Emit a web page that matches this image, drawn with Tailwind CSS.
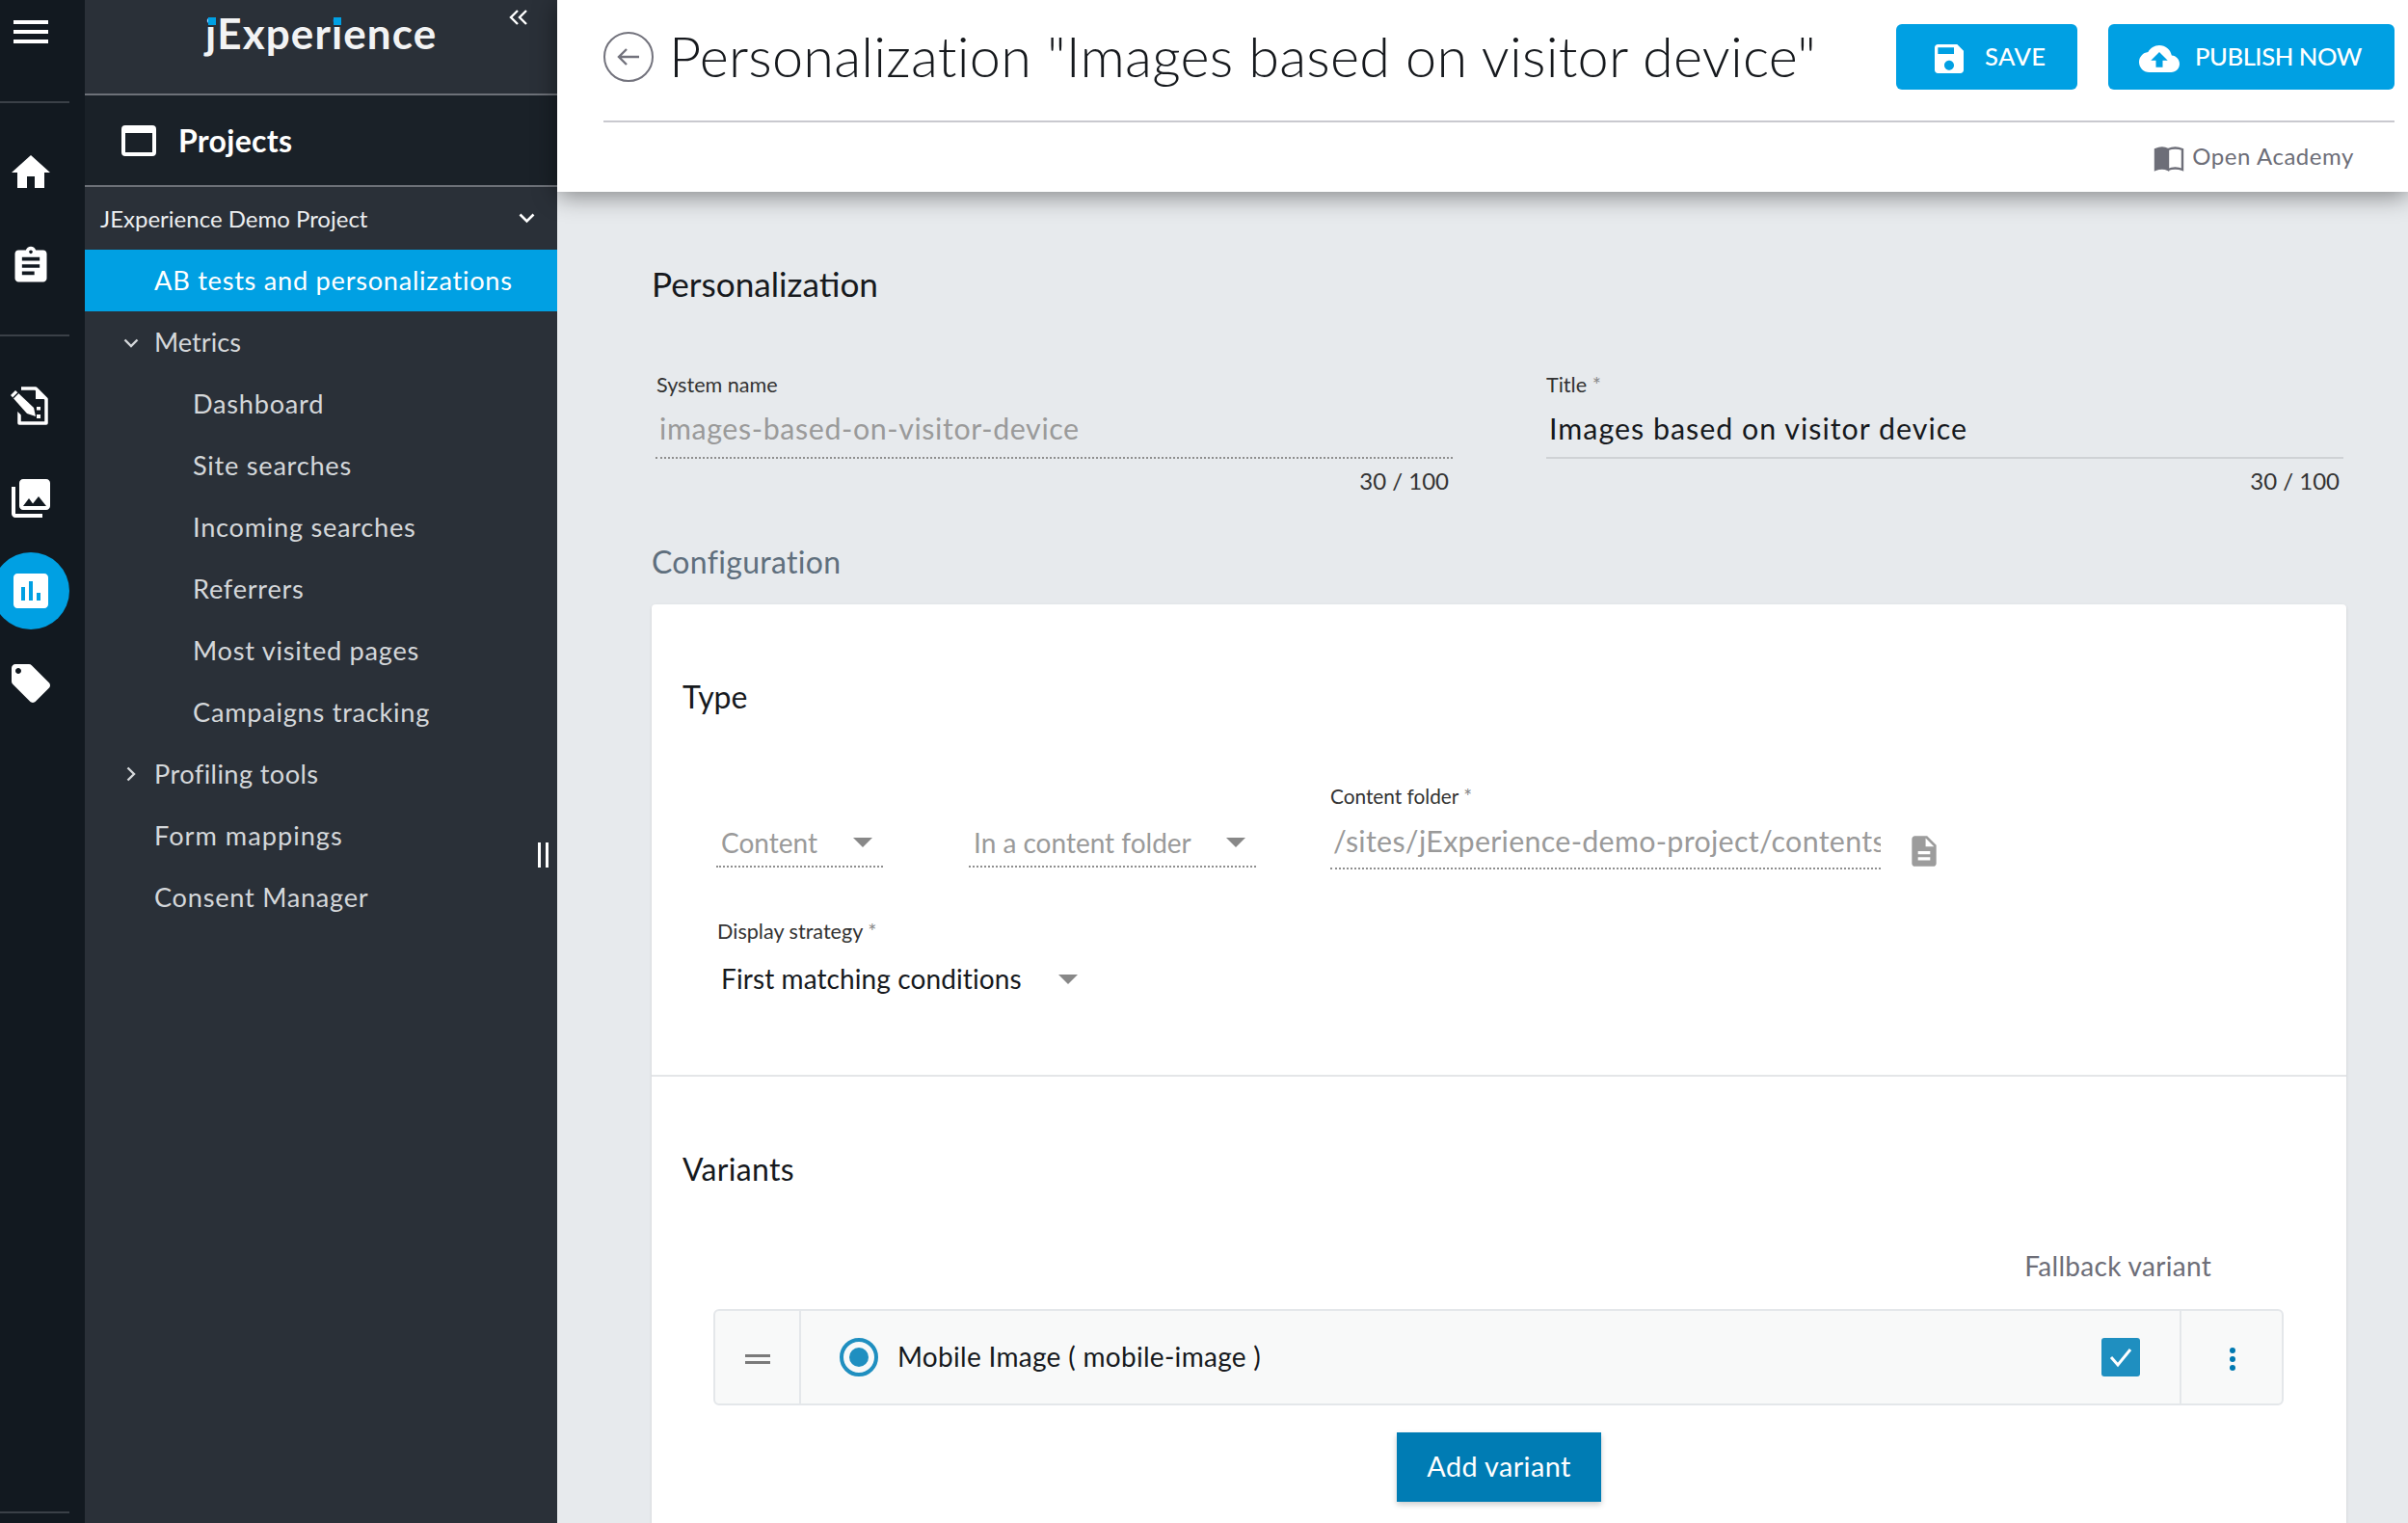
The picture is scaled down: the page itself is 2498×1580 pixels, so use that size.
<!DOCTYPE html>
<html lang="en">
<head>
    <meta charset="UTF-8">
    <title>jExperience</title>
    <script src="https://cdn.jsdelivr.net/npm/@tailwindcss/browser@4"></script>
</head>
<body class="font-['Lato','Open_Sans',sans-serif]">
<div class="flex w-[2498px] h-[1580px] overflow-hidden bg-[#e7eaed]">

    <!-- icon rail -->
    <aside class="w-[88px] shrink-0 h-full bg-[#121920] flex flex-col">
        <div class="h-[107px] w-[72px] border-b-2 border-[#3a4047] pl-[14px] pt-[21px]">
            <svg class="w-[36px] h-[24px]" viewBox="0 0 36 24" fill="#fff"><rect width="36" height="4"/><rect y="10" width="36" height="4"/><rect y="20" width="36" height="4"/></svg>
        </div>
        <div class="h-[242px] w-[72px] border-b-2 border-[#3a4047] flex flex-col items-center pr-[8px] pt-[48px] gap-[55px]">
            <svg class="w-[48px] h-[48px] shrink-0" viewBox="0 0 24 24" fill="#fff"><path d="M10 20v-6h4v6h5v-8h3L12 3 2 12h3v8z"/></svg>
            <svg class="w-[44px] h-[44px] shrink-0 -mt-[4px]" viewBox="0 0 24 24" fill="#fff"><path d="M19 3h-4.18C14.4 1.84 13.3 1 12 1c-1.3 0-2.4.84-2.82 2H5c-1.1 0-2 .9-2 2v14c0 1.1.9 2 2 2h14c1.1 0 2-.9 2-2V5c0-1.1-.9-2-2-2zm-7 0c.55 0 1 .45 1 1s-.45 1-1 1-1-.45-1-1 .45-1 1-1zm2 14H7v-2h7v2zm3-4H7v-2h10v2zm0-4H7V7h10v2z"/></svg>
        </div>
        <div class="relative flex-1">
            <svg class="absolute left-[10px] top-[52px] w-[40px] h-[40px]" viewBox="0 0 40 40" fill="none">
                <path d="M12 2H27L38 13V38H10V24" stroke="#fff" stroke-width="3.5" stroke-linejoin="round"/>
                <path d="M27 3V13H37z" fill="#fff"/>
                <path d="M3 10L23 29" stroke="#121920" stroke-width="16"/>
                <path d="M1 9L6 4L25 22L27 31L18 28z" fill="#fff"/>
                <path d="M3.500 12L9 6.500" stroke="#121920" stroke-width="1.500"/>
                <rect x="28" y="21" width="4" height="3.500" fill="#fff"/>
                <rect x="28" y="29" width="4" height="4" fill="#fff"/>
            </svg>
            <svg class="absolute left-[8px] top-[144px] w-[48px] h-[48px]" viewBox="0 0 24 24" fill="#fff"><path d="M22 16V4c0-1.1-.9-2-2-2H8c-1.1 0-2 .9-2 2v12c0 1.1.9 2 2 2h12c1.1 0 2-.9 2-2zm-11-4l2.03 2.71L16 11l4 5H8l3-4zM2 6v14c0 1.1.9 2 2 2h14v-2H4V6H2z"/></svg>
            <div class="absolute -left-[8px] top-[224px] w-[80px] h-[80px] rounded-full bg-[#00a0e3] flex items-center justify-center">
                <svg class="w-[48px] h-[48px]" viewBox="0 0 24 24" fill="#fff"><path d="M19 3H5c-1.1 0-2 .9-2 2v14c0 1.1.9 2 2 2h14c1.1 0 2-.9 2-2V5c0-1.1-.9-2-2-2zM9 17H7v-7h2v7zm4 0h-2V7h2v10zm4 0h-2v-4h2v4z"/></svg>
            </div>
            <svg class="absolute left-[8px] top-[336px] w-[48px] h-[48px]" viewBox="0 0 24 24" fill="#fff"><path d="M21.41 11.58l-9-9C12.05 2.22 11.55 2 11 2H4c-1.1 0-2 .9-2 2v7c0 .55.22 1.05.59 1.42l9 9c.36.36.86.58 1.41.58.55 0 1.05-.22 1.41-.59l7-7c.37-.36.59-.86.59-1.41 0-.55-.23-1.06-.59-1.42zM5.5 7C4.67 7 4 6.33 4 5.5S4.67 4 5.5 4 7 4.67 7 5.5 6.33 7 5.5 7z"/></svg>
            <div class="absolute left-0 bottom-[10px] w-[72px] h-[2px] bg-[#3a4047]"></div>
        </div>
    </aside>

    <!-- project sidebar -->
    <nav class="relative w-[490px] shrink-0 h-full bg-[#2a3038] text-[27.2px] text-[#d4d7da]">
        <div class="relative h-[97px] pl-[125px]">
            <span class="block pt-[7px] text-[44px] leading-[54px] font-bold text-[#f2f3f4] tracking-[1.1px]"><span class="relative">j<span class="absolute left-[3px] top-[10px] w-[8px] h-[8px] bg-[#00a0e3]"></span></span>Exper<span class="relative">i<span class="absolute left-[2px] top-[10px] w-[8px] h-[8px] bg-[#00a0e3]"></span></span>ence</span>
            <svg class="absolute left-[440px] top-[10px] w-[20px] h-[16px]" viewBox="0 0 20 16" fill="none" stroke="#fff" stroke-width="2.4"><path d="M9 1L2 8l7 7M18 1l-7 7 7 7"/></svg>
        </div>
        <div class="h-[97px] bg-[#1a2128] border-y-2 border-[#6d7178] flex items-center pl-[38px] gap-[23px] text-white">
            <svg class="w-[36px] h-[32px]" viewBox="0 0 36 32" fill="none"><rect x="2" y="2" width="32" height="28" rx="2" stroke="#fff" stroke-width="4"/><rect x="2" y="2" width="32" height="6" fill="#fff"/></svg>
            <span class="text-[32px] font-bold tracking-[0.3px]">Projects</span>
        </div>
        <div class="h-[65px] flex items-center justify-between pl-[16px] pr-[23px] text-[24px] text-[#eceef0]">
            <span>JExperience Demo Project</span>
            <svg class="w-[17px] h-[11px]" viewBox="0 0 17 11" fill="none" stroke="#fff" stroke-width="2.6"><path d="M1.5 1.5l7 7 7-7"/></svg>
        </div>
        <div class="h-[64px] bg-[#00a0e3] text-white flex items-center pl-[72px] tracking-[0.73px]">AB tests and personalizations</div>
        <div class="relative h-[64px] flex items-center pl-[72px] tracking-[0px]">
            <svg class="absolute left-[40px] top-[28px] w-[16px] h-[10px]" viewBox="0 0 16 10" fill="none" stroke="#d4d7da" stroke-width="2.4"><path d="M1.5 1.5L8 8l6.5-6.5"/></svg>
            Metrics
        </div>
        <div class="h-[64px] flex items-center pl-[112px] tracking-[0.73px]">Dashboard</div>
        <div class="h-[64px] flex items-center pl-[112px] tracking-[0.73px]">Site searches</div>
        <div class="h-[64px] flex items-center pl-[112px] tracking-[0.73px]">Incoming searches</div>
        <div class="h-[64px] flex items-center pl-[112px] tracking-[0.73px]">Referrers</div>
        <div class="h-[64px] flex items-center pl-[112px] tracking-[0.73px]">Most visited pages</div>
        <div class="h-[64px] flex items-center pl-[112px] tracking-[0.73px]">Campaigns tracking</div>
        <div class="relative h-[64px] flex items-center pl-[72px] tracking-[0.4px]">
            <svg class="absolute left-[43px] top-[24px] w-[10px] h-[16px]" viewBox="0 0 10 16" fill="none" stroke="#d4d7da" stroke-width="2.4"><path d="M1.5 1.5L8 8l-6.5 6.5"/></svg>
            Profiling tools
        </div>
        <div class="h-[64px] flex items-center pl-[72px] tracking-[1px]">Form mappings</div>
        <div class="h-[64px] flex items-center pl-[72px] tracking-[0.73px]">Consent Manager</div>
        <div class="absolute left-[470px] top-[874px] w-[11px] h-[26px] border-x-[3px] border-white"></div>
    </nav>

    <!-- main -->
    <main class="flex-1 min-w-0 h-full relative">
        <header class="relative z-10 h-[199px] bg-white shadow-[0_4px_24px_rgba(0,0,0,0.45)] pl-[48px] pr-[14px]">
            <div class="h-[127px] border-b-2 border-[#c9c9cf] flex items-start">
                <svg class="w-[52px] h-[52px] mt-[33px] shrink-0" viewBox="0 0 52 52" fill="none" stroke="#73737d" stroke-width="2"><circle cx="26" cy="26" r="25"/><path d="M37 26H16M24 18l-8 8 8 8" stroke-width="2.4"/></svg>
                <h1 class="ml-[16px] mt-[23px] text-[57.6px] leading-[70px] font-light text-[#16191d] tracking-[0.22px] whitespace-nowrap">Personalization "Images based on visitor device"</h1>
                <div class="ml-auto mt-[25px] flex gap-[32px]">
                    <div class="w-[188px] h-[68px] rounded-[6px] bg-[#00a0e3] text-white flex items-center pl-[35px] gap-[17px] text-[25.6px] font-medium tracking-[0.4px]">
                        <svg class="w-[40px] h-[40px] mt-[4px]" viewBox="0 0 24 24" fill="#fff"><path d="M17 3H5c-1.11 0-2 .9-2 2v14c0 1.1.89 2 2 2h14c1.1 0 2-.9 2-2V7l-4-4zm-5 16c-1.66 0-3-1.34-3-3s1.34-3 3-3 3 1.34 3 3-1.34 3-3 3zm3-10H5V5h10v4z"/></svg>
                        <span class="-mt-[1px]">SAVE</span>
                    </div>
                    <div class="w-[297px] h-[68px] rounded-[6px] bg-[#00a0e3] text-white flex items-center pl-[32px] gap-[16px] text-[25.6px] font-medium tracking-[-0.45px]">
                        <svg class="w-[42px] h-[42px] mt-[4px]" viewBox="0 0 24 24" fill="#fff"><path d="M19.35 10.04C18.67 6.59 15.64 4 12 4 9.11 4 6.6 5.64 5.35 8.04 2.34 8.36 0 10.91 0 14c0 3.31 2.69 6 6 6h13c2.76 0 5-2.24 5-5 0-2.64-2.05-4.78-4.65-4.96zM14 13v4h-4v-4H7l5-5 5 5h-3z"/></svg>
                        <span class="-mt-[1px]">PUBLISH NOW</span>
                    </div>
                </div>
            </div>
            <div class="flex justify-end items-center h-[70px] pr-[42px] gap-[8px] text-[24px] text-[#6d6e78] tracking-[0.55px]">
                <svg class="w-[32px] h-[28px] mt-[4px]" viewBox="0 0 32 28" fill="none" stroke="#6d6e78" stroke-width="2.4"><path d="M2 5c5-2 9-2 13 0v21c-4-2-8-2-13 0z" fill="#6d6e78"/><path d="M15 5c5-2 10-2 15 0v21c-5-2-10-2-15 0"/></svg>
                Open Academy
            </div>
        </header>

        <div class="pl-[98px] pr-[64px]">
            <h2 class="mt-[74px] text-[35.2px] leading-[42px] text-[#16191d]">Personalization</h2>
            <div class="mt-[70px] grid grid-cols-[827px_827px] gap-x-[97px] pl-[4px]">
                <div>
                    <div class="text-[21.6px] leading-[28px] pl-[1px] text-[#333]">System name</div>
                    <div class="mt-[9px] h-[54px] pl-[4px] text-[30.4px] leading-[44px] text-[#9a9a9a] tracking-[0.6px] border-b-2 border-dotted border-[#8f8f8f]">images-based-on-visitor-device</div>
                    <div class="mt-[9px] pr-[4px] text-right text-[24px] leading-[28px] text-[#333]">30 / 100</div>
                </div>
                <div>
                    <div class="text-[21.6px] leading-[28px] text-[#333]">Title <span class="text-[#888]">*</span></div>
                    <div class="mt-[9px] h-[54px] pl-[3px] text-[30.4px] leading-[44px] text-[#16191d] tracking-[1px] border-b-2 border-[#cfd2d5]">Images based on visitor device</div>
                    <div class="mt-[9px] pr-[4px] text-right text-[24px] leading-[28px] text-[#333]">30 / 100</div>
                </div>
            </div>
            <h3 class="mt-[50px] text-[32px] leading-[40px] text-[#5f6f7d] tracking-[0.3px]">Configuration</h3>

            <section class="mt-[24px] w-[1758px] h-[960px] bg-white rounded-[4px] shadow-[0_1px_3px_rgba(0,0,0,0.12)]">
                <div class="h-[490px] border-b-2 border-[#e4e6e8] pl-[32px] relative">
                    <h3 class="pt-[76px] text-[32px] leading-[40px] text-[#16191d]">Type</h3>
                    <div class="mt-[69px] pl-[35px] flex items-end">
                        <div class="w-[173px] h-[66px] border-b-2 border-dotted border-[#8f8f8f] flex items-center justify-between pl-[5px] pr-[11px] pt-[16px] text-[28px] text-[#9a9a9a]">
                            Content
                            <span class="w-0 h-0 border-x-[10px] border-x-transparent border-t-[10px] border-t-[#888]"></span>
                        </div>
                        <div class="ml-[89px] w-[298px] h-[66px] border-b-2 border-dotted border-[#8f8f8f] flex items-center justify-between pl-[5px] pr-[11px] pt-[16px] text-[28px] text-[#9a9a9a]">
                            In a content folder
                            <span class="w-0 h-0 border-x-[10px] border-x-transparent border-t-[10px] border-t-[#888]"></span>
                        </div>
                        <div class="ml-[77px] w-[571px] -mb-[2px]">
                            <div class="text-[20.8px] leading-[28px] text-[#333]">Content folder <span class="text-[#888]">*</span></div>
                            <div class="mt-[6px] h-[56px] pl-[3px] pt-[4px] text-[30.4px] leading-[44px] text-[#9a9a9a] tracking-[0.3px] border-b-2 border-dotted border-[#8f8f8f] overflow-hidden whitespace-nowrap">/sites/jExperience-demo-project/contents/images</div>
                        </div>
                        <svg class="ml-[26px] mb-[-2px] w-[38px] h-[38px] self-end" viewBox="0 0 24 24" fill="#9c9c9c"><path d="M14 2H6c-1.1 0-1.99.9-1.99 2L4 20c0 1.1.89 2 1.99 2H18c1.1 0 2-.9 2-2V8l-6-6zm2 16H8v-2h8v2zm0-4H8v-2h8v2zm-3-5V3.5L18.5 9H13z"/></svg>
                    </div>
                    <div class="mt-[52px] pl-[36px] text-[21.6px] leading-[28px] text-[#333]">Display strategy <span class="text-[#888]">*</span></div>
                    <div class="mt-[13px] pl-[40px] flex items-center text-[28px] leading-[44px] text-[#16191d] tracking-[0.1px]">
                        First matching conditions
                        <span class="ml-[38px] w-0 h-0 border-x-[10px] border-x-transparent border-t-[10px] border-t-[#888] mt-[2px]"></span>
                    </div>
                </div>
                <div class="pl-[32px]">
                    <h3 class="pt-[76px] text-[32px] leading-[40px] text-[#16191d] tracking-[0.3px]">Variants</h3>
                    <div class="mt-[60px] w-[1586px] text-right text-[28px] leading-[40px] text-[#6d6e78] tracking-[0.3px]">Fallback variant</div>
                    <div class="mt-[25px] ml-[32px] w-[1629px] h-[100px] border-2 border-[#e4e7ea] rounded-[6px] bg-[#f8f9f9] flex items-stretch">
                        <div class="w-[89px] border-r-2 border-[#e4e7ea] flex items-center justify-center">
                            <svg class="w-[26px] h-[10px] mt-[4px]" viewBox="0 0 26 10" fill="#7a7a7a"><rect width="26" height="3"/><rect y="7" width="26" height="3"/></svg>
                        </div>
                        <div class="flex-1 flex items-center pl-[40px] text-[28px] text-[#16191d] tracking-[0.3px]">
                            <span class="w-[40px] h-[40px] rounded-full border-[4px] border-[#1f8fc0] flex items-center justify-center mr-[20px]"><span class="w-[20px] h-[20px] rounded-full bg-[#1f8fc0]"></span></span>
                            <span class="-mt-[2px]">Mobile Image ( mobile-image )</span>
                        </div>
                        <div class="w-[81px] flex items-center">
                            <span class="w-[40px] h-[40px] rounded-[3px] bg-[#1f8fc0] flex items-center justify-center">
                                <svg class="w-[30px] h-[30px]" viewBox="0 0 30 30" fill="none" stroke="#fff" stroke-width="3"><path d="M5 15l7 8L25 7"/></svg>
                            </span>
                        </div>
                        <div class="w-[106px] border-l-2 border-[#e4e7ea] flex flex-col items-center justify-center gap-[3px] pt-[4px] pl-[2px]">
                            <span class="w-[6px] h-[6px] rounded-full bg-[#0079b1]"></span>
                            <span class="w-[6px] h-[6px] rounded-full bg-[#0079b1]"></span>
                            <span class="w-[6px] h-[6px] rounded-full bg-[#0079b1]"></span>
                        </div>
                    </div>
                    <div class="mt-[28px] ml-[741px] w-[212px] h-[72px] bg-[#007cb4] text-white text-[28.8px] tracking-[0.4px] flex items-center justify-center shadow-[0_3px_6px_rgba(0,0,0,0.2)]">Add variant</div>
                </div>
            </section>
        </div>
    </main>
</div>
</body>
</html>
